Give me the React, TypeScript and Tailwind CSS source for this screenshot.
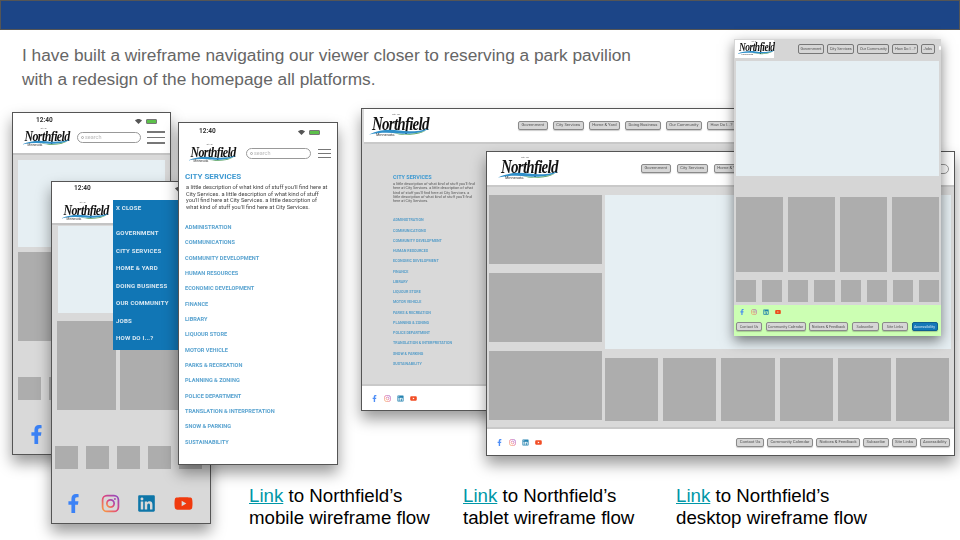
import React from "react";
import { FaFacebookF, FaLinkedin, FaYoutube } from "react-icons/fa";

const cityLinks = [
  "ADMINISTRATION", "COMMUNICATIONS", "COMMUNITY DEVELOPMENT", "HUMAN RESOURCES", "ECONOMIC DEVELOPMENT",
  "FINANCE", "LIBRARY", "LIQUOUR STORE", "MOTOR VEHICLE", "PARKS & RECREATION", "PLANNING & ZONING",
  "POLICE DEPARTMENT", "TRANSLATION & INTERPRETATION", "SNOW & PARKING", "SUSTAINABILITY",
];
const menuLinks = ["GOVERNMENT", "CITY SERVICES", "HOME & YARD", "DOING BUSINESS", "OUR COMMUNITY", "JOBS", "HOW DO I...?"];
const desc = "a little description of what kind of stuff you'll find here at City Services. a little description of what kind of stuff you'll find here at City Services. a little description of what kind of stuff you'll find here at City Services.";
const footerLinks = ["Contact Us", "Community Calendar", "Notices & Feedback", "Subscribe", "Site Links", "Accessibility"];

function Logo({ box, scale }: { box: string; scale: string }) {
  return (
    <div className={`shrink-0 ${box}`}>
      <div className={`relative w-[59px] h-[24px] origin-top-left blur-[0.3px] ${scale}`}>
        <span className="absolute left-[23px] top-[0px] text-[2.5px] leading-none text-[#555] font-['Liberation_Sans',sans-serif]">City Of</span>
        <span className="absolute left-[3px] top-[1px] origin-top-left scale-y-[1.25] text-[15px] leading-none italic font-bold tracking-[-0.75px] text-[#111] font-['Liberation_Serif',serif]">Northfield</span>
        <svg className="absolute left-0 top-[14px]" width="60" height="8" viewBox="0 0 60 8">
          <path d="M0 6.5 C10 2 20 1 30 2.5 C40 4 50 3.5 60 0.5 C54 5 42 6.5 30 5.5 C20 4.5 10 4.5 0 6.5Z" fill="#2f8fc9" />
          <path d="M24 5 C34 7 46 6.5 57 2.5 C49 7.5 34 8 24 5Z" fill="#4f9d5a" />
        </svg>
        <span className="absolute left-[7px] top-[19px] text-[4px] leading-none text-[#333] font-['Liberation_Sans',sans-serif]">Minnesota</span>
      </div>
    </div>
  );
}

function Instagram({ size }: { size: string }) {
  return (
    <svg className={size} viewBox="0 0 24 24" fill="none">
      <defs>
        <linearGradient id="ig" x1="0" y1="1" x2="1" y2="0">
          <stop offset="0" stopColor="#f9a03f" />
          <stop offset="0.5" stopColor="#e1467c" />
          <stop offset="1" stopColor="#8a49c6" />
        </linearGradient>
      </defs>
      <rect x="2" y="2" width="20" height="20" rx="5.5" stroke="url(#ig)" strokeWidth="2.2" />
      <circle cx="12" cy="12" r="4.6" stroke="url(#ig)" strokeWidth="2.2" />
      <circle cx="17.6" cy="6.4" r="1.3" fill="#b04bb0" />
    </svg>
  );
}

function Socials({ gap, size, soft }: { gap: string; size: string; soft?: boolean }) {
  return (
    <div className={`flex items-center ${gap} ${soft ? "blur-[0.3px] opacity-90" : ""}`}>
      <FaFacebookF className={`${size} text-[#3b82f6]`} />
      <Instagram size={size} />
      <FaLinkedin className={`${size} text-[#0e76a8]`} />
      <FaYoutube className={`${size} text-[#f03a0e]`} />
    </div>
  );
}

function NavBtn({ label, blue, fill }: { label: string; blue?: boolean; fill?: boolean }) {
  return (
    <span
      className={`shrink-0 whitespace-nowrap rounded-[2px] border h-[9px] flex items-center justify-center leading-none blur-[0.25px] font-['Roboto',sans-serif] shadow-[0_1px_1px_rgba(0,0,0,0.2)] ${
        fill ? "text-[3.8px]" : "px-[2.5px] text-[4.2px]"
      } ${blue ? "bg-[#1478b8] border-[#0f5d90] text-[#cfe4f2]" : "bg-[#d6d6d6] border-[#8a8a8a] text-[#555]"}`}
    >
      {label}
    </span>
  );
}

function Status({ left, right }: { left: string; right: string }) {
  return (
    <div className={`flex items-center h-[14px] ${left} ${right}`}>
      <span className="text-[6.5px] font-bold text-[#333] blur-[0.2px] font-['Roboto',sans-serif]">12:40</span>
      <svg className="ml-auto" width="7" height="5" viewBox="0 0 14 10">
        <path d="M7 10 L0 3 C4 -1 10 -1 14 3Z" fill="#555" />
      </svg>
      <span className="ml-[4px] w-[11px] h-[5px] rounded-[1px] bg-[#5cc04a] border border-[#777]" />
    </div>
  );
}

function SearchPill({ width }: { width: string }) {
  return (
    <div className={`${width} h-[11px] rounded-full border border-[#999] flex items-center pl-[3px] gap-[1px] text-[5.5px] text-[#bbb] blur-[0.2px] font-['Roboto',sans-serif]`}>
      <span className="w-[3px] h-[3px] rounded-full border border-[#aaa]" />
      search
    </div>
  );
}

function Burger({ width, gap }: { width: string; gap: string }) {
  return (
    <div className={`${width} flex flex-col ${gap}`}>
      <span className="h-[1.5px] bg-[#777]" />
      <span className="h-[1.5px] bg-[#777]" />
      <span className="h-[1.5px] bg-[#777]" />
    </div>
  );
}

function MobileBody({ first }: { first?: boolean }) {
  return (
    <>
      <div className={`mt-[1px] h-[87px] bg-[#e6eff3] ${first ? "mx-[5px]" : "mx-[6px]"}`} />
      <div className={`flex gap-[4px] h-[89px] ${first ? "mx-[5px] mt-[5px]" : "mx-[5px] mt-[8px]"}`}>
        <div className="w-[59px] bg-[#adadad]" />
        <div className="flex-1 bg-[#adadad]" />
      </div>
      <div className={`mt-[36px] flex gap-[8px] ${first ? "pl-[5px]" : "pl-[3px]"}`}>
        {[0, 1, 2, 3, 4].map((i) => (
          <div key={i} className="w-[23px] h-[23px] shrink-0 bg-[#adadad]" />
        ))}
      </div>
      <div className={`mt-[25px] ${first ? "pl-[14px]" : "pl-[12px]"}`}>
        <Socials gap="gap-[17.5px]" size="w-[19px] h-[19px]" />
      </div>
    </>
  );
}

function CityList({ cls }: { cls: string }) {
  return (
    <ul className={`flex flex-col ${cls}`}>
      {cityLinks.map((c) => (
        <li key={c} className="whitespace-nowrap leading-none">{c}</li>
      ))}
    </ul>
  );
}

const frame = "absolute border border-[#555] shadow-[0_8px_14px_rgba(0,0,0,0.4)] overflow-hidden";

export default function App() {
  return (
    <div className="relative w-[960px] h-[540px] overflow-hidden bg-white flex flex-col font-['Liberation_Sans',sans-serif]">
      <div className="h-[30px] shrink-0 bg-[#1c4587] border border-[#555]" />
      <p className="pl-[22px] pt-[13px] text-[17.3px] leading-[24px] text-[#666666]">
        I have built a wireframe navigating our viewer closer to reserving a park pavilion
        <br />
        with a redesign of the homepage all platforms.
      </p>

      {/* mobile home */}
      <div className={`${frame} left-[12px] top-[112px] w-[159px] h-[343px] bg-[#d9d9d9]`}>
        <div className="bg-white border-b-[2px] border-[#c4c4c4] h-[42px]">
          <div className="pt-[1px]"><Status left="pl-[23px]" right="pr-[13px]" /></div>
          <div className="flex items-center pl-[9px] pr-[5px]">
            <Logo box="w-[47px] h-[19px]" scale="scale-[0.8]" />
            <div className="ml-[8px]"><SearchPill width="w-[64px]" /></div>
            <div className="ml-auto"><Burger width="w-[18px]" gap="gap-[4px]" /></div>
          </div>
        </div>
        <div className="mt-[5px]"><MobileBody first /></div>
      </div>

      {/* mobile menu open */}
      <div className={`${frame} left-[51px] top-[181px] w-[160px] h-[343px] bg-[#d9d9d9]`}>
        <div className="bg-white border-b-[2px] border-[#c4c4c4] h-[43px]">
          <Status left="pl-[22px]" right="pr-[13px]" />
          <div className="pl-[9px] pt-[6px]"><Logo box="w-[47px] h-[19px]" scale="scale-[0.8]" /></div>
        </div>
        <MobileBody />
        <div className="absolute left-[61px] top-[18px] w-[66px] h-[150px] bg-[#1176b5] pl-[3px] pt-[3px] text-[#dbe9f3] text-[6.1px] font-bold tracking-[0.2px] blur-[0.2px] font-['Roboto',sans-serif]">
          <div className="leading-[9px]">X CLOSE</div>
          <div className="mt-[16px] flex flex-col gap-[8.5px]">
            {menuLinks.map((m) => (
              <div key={m} className="leading-[9px] whitespace-nowrap">{m}</div>
            ))}
          </div>
        </div>
      </div>

      {/* mobile city services */}
      <div className={`${frame} left-[178px] top-[122px] w-[160px] h-[343px] bg-white`}>
        <div className="pt-[2px]"><Status left="pl-[20px]" right="pr-[17px]" /></div>
        <div className="flex items-center pl-[9px] pr-[6px] pt-[5px]">
          <Logo box="w-[47px] h-[19px]" scale="scale-[0.8]" />
          <div className="ml-[11px]"><SearchPill width="w-[65px]" /></div>
          <div className="ml-auto"><Burger width="w-[13px]" gap="gap-[2.5px]" /></div>
        </div>
        <div className="pl-[6px] pt-[9px] blur-[0.25px] font-['Roboto',sans-serif]">
          <h3 className="text-[8px] leading-[9px] font-bold text-[#3f9ad2]">CITY SERVICES</h3>
          <p className="mt-[3px] ml-[1px] w-[143px] text-[5.7px] leading-[6.5px] text-[#444]">{desc}</p>
          <div className="mt-[15px]">
            <CityList cls="gap-[9.75px] text-[5.6px] font-bold text-[#59a3d0]" />
          </div>
        </div>
      </div>

      {/* tablet */}
      <div className={`${frame} left-[361px] top-[108px] w-[380px] h-[303px] bg-[#d9d9d9] flex flex-col`}>
        <div className="h-[35px] bg-white ml-[2px] border-b-[2px] border-[#c9c9c9] flex items-center pl-[5px]">
          <Logo box="w-[59px] h-[24px]" scale="scale-100" />
          <div className="ml-[90px] flex gap-[5px]">
            {["Government", "City Services", "Home & Yard", "Doing Business", "Our Community", "How Do I...?"].map((n) => (
              <NavBtn key={n} label={n} />
            ))}
          </div>
        </div>
        <div className="flex-1 pl-[31px] pt-[30px] blur-[0.25px] font-['Roboto',sans-serif]">
          <h3 className="text-[5.5px] leading-[7px] font-bold text-[#3f9ad2]">CITY SERVICES</h3>
          <p className="mt-[1px] w-[84px] text-[3.8px] leading-[4.3px] text-[#555]">{desc}</p>
          <div className="mt-[16px]">
            <CityList cls="gap-[6.55px] text-[3.7px] font-bold text-[#5a9fc9]" />
          </div>
        </div>
        <div className="h-[26px] bg-white border-t-[2px] border-[#c9c9c9] flex items-center pl-[9px]">
          <Socials gap="gap-[6px]" size="w-[7px] h-[7px]" soft />
        </div>
      </div>

      {/* desktop */}
      <div className={`${frame} left-[486px] top-[151px] w-[469px] h-[305px] bg-[#d9d9d9] flex flex-col`}>
        <div className="h-[35px] shrink-0 bg-white border-b-[2px] border-[#c9c9c9] flex items-center pl-[11px] pr-[5px]">
          <Logo box="w-[59px] h-[24px]" scale="scale-100" />
          <div className="ml-[84px] flex gap-[6px]">
            <NavBtn label="Government" />
            <NavBtn label="City Services" />
            <NavBtn label="Home & Yard" />
          </div>
          <div className="ml-auto w-[20px] h-[10px] rounded-full border border-[#999]" />
        </div>
        <div className="flex-1 flex gap-[3px] pl-[2px] pr-[3px] pt-[8px]">
          <div className="w-[113px] flex flex-col gap-[9px]">
            <div className="h-[69px] bg-[#adadad]" />
            <div className="h-[69px] bg-[#adadad]" />
            <div className="h-[69px] bg-[#adadad]" />
          </div>
          <div className="flex-1 flex flex-col">
            <div className="h-[154px] bg-[#e6eff3]" />
            <div className="mt-[9px] flex gap-[5px] pr-[2px]">
              {[0, 1, 2, 3, 4, 5].map((i) => (
                <div key={i} className="flex-1 h-[63px] bg-[#adadad]" />
              ))}
            </div>
          </div>
        </div>
        <div className="h-[28px] shrink-0 bg-white border-t-[2px] border-[#c9c9c9] flex items-center pl-[9px] pr-[4px]">
          <Socials gap="gap-[6px]" size="w-[7px] h-[7px]" soft />
          <div className="ml-auto flex gap-[3px]">
            {footerLinks.map((n) => (
              <NavBtn key={n} label={n} />
            ))}
          </div>
        </div>
      </div>

      {/* wide screen */}
      <div className="absolute left-[734px] top-[39px] w-[207px] h-[297px] bg-[#d6d6d6] shadow-[0_5px_12px_rgba(0,0,0,0.5)] flex flex-col">
        <div className="h-[22px] shrink-0 flex items-start">
          <div className="bg-white mt-[1px] ml-[1px] w-[41px] h-[18px] pl-[2px] pt-[1px]">
            <Logo box="w-[37px] h-[15px]" scale="scale-[0.63]" />
          </div>
          <div className="ml-[24px] mt-[5px] flex gap-[3px]">
            {["Government", "City Services", "Our Community", "How Do I...?", "Jobs"].map((n) => (
              <span key={n} className="h-[10px] px-[1.5px] flex items-center whitespace-nowrap rounded-[2px] border border-[#777] bg-[#d6d6d6] text-[3.9px] text-[#555] blur-[0.25px] font-['Roboto',sans-serif]">{n}</span>
            ))}
          </div>
          <span className="ml-[4px] mt-[7px] w-[4px] h-[4px] rounded-full bg-white" />
        </div>
        <div className="mx-[2px] h-[115px] shrink-0 bg-[#e6eff3]" />
        <div className="mt-[21px] mx-[2px] flex gap-[5px]">
          {[0, 1, 2, 3].map((i) => (
            <div key={i} className="flex-1 h-[75px] bg-[#adadad]" />
          ))}
        </div>
        <div className="mt-[8px] mx-[2px] flex gap-[6px]">
          {[0, 1, 2, 3, 4, 5, 6, 7].map((i) => (
            <div key={i} className="flex-1 h-[22px] bg-[#adadad]" />
          ))}
        </div>
        <div className="mt-[3px] flex-1 bg-[#ccffb3] px-[2px] pt-[4px]">
          <div className="pl-[3px]"><Socials gap="gap-[6px]" size="w-[6px] h-[6px]" soft /></div>
          <div className="mt-[7px] grid grid-cols-[26px_40px_39px_27px_26px_26px] gap-[3.5px]">
            {footerLinks.map((n, i) => (
              <NavBtn key={n} label={n} blue={i === 5} fill />
            ))}
          </div>
        </div>
      </div>

      <div className="mt-auto flex pl-[249px] pb-[11px] text-[18.7px] leading-[22px] text-black">
        {["mobile", "tablet", "desktop"].map((p, i) => (
          <div key={p} className={i === 0 ? "w-[214px]" : "w-[213px]"}>
            <span className="text-[#0097a7] underline">Link</span> to Northfield’s
            <br />
            {p} wireframe flow
          </div>
        ))}
      </div>
    </div>
  );
}
